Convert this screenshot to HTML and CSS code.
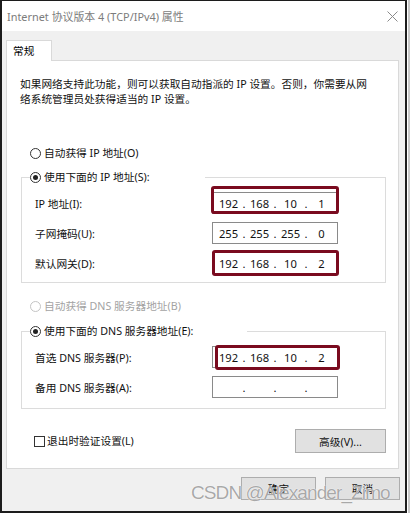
FILE: index.html
```html
<!DOCTYPE html>
<html lang="zh-CN">
<head>
    <meta charset="UTF-8">
    <meta name="viewport" content="width=device-width, initial-scale=1.0">
    <title>Internet 协议版本 4 (TCP/IPv4) 属性</title>
    <link rel="stylesheet" href="styles.css">
</head>
<body>

    <div class="screen">
        <div class="dialog">
            <div class="titlebar">
                <span class="title">Internet 协议版本 4 (TCP/IPv4) 属性</span>
                <svg class="close" width="11" height="11" viewBox="0 0 11 11">
                    <path d="M0.5 0.5 L10.5 10.5 M10.5 0.5 L0.5 10.5" stroke="#8a8a8a" stroke-width="1" fill="none"/>
                </svg>
            </div>

            <div class="body">
                <div class="tabs">
                    <div class="tab">常规</div>
                </div>

                <div class="panel">
                    <p class="intro">如果网络支持此功能，则可以获取自动指派的 IP 设置。否则，你需要从网<br>络系统管理员处获得适当的 IP 设置。</p>

                    <label class="option first"><span class="radio"></span>自动获得 IP 地址(O)</label>

                    <fieldset class="group ip-group">
                        <legend class="option legend-ip"><span class="radio on"></span>使用下面的 IP 地址(S):</legend>
                        <div class="rows">
                            <div class="row">
                                <span>IP 地址(I):</span>
                                <div class="field marked mark-ip">
                                    <span class="oct">192</span><span class="dot">.</span><span class="oct">168</span><span class="dot">.</span><span class="oct">10</span><span class="dot">.</span><span class="oct">1</span>
                                </div>
                            </div>
                            <div class="row">
                                <span>子网掩码(U):</span>
                                <div class="field">
                                    <span class="oct">255</span><span class="dot">.</span><span class="oct">255</span><span class="dot">.</span><span class="oct">255</span><span class="dot">.</span><span class="oct">0</span>
                                </div>
                            </div>
                            <div class="row">
                                <span>默认网关(D):</span>
                                <div class="field marked mark-gw">
                                    <span class="oct">192</span><span class="dot">.</span><span class="oct">168</span><span class="dot">.</span><span class="oct">10</span><span class="dot">.</span><span class="oct">2</span>
                                </div>
                            </div>
                        </div>
                    </fieldset>

                    <label class="option disabled dns-auto"><span class="radio"></span>自动获得 DNS 服务器地址(B)</label>

                    <fieldset class="group dns-group">
                        <legend class="option legend-dns"><span class="radio on"></span>使用下面的 DNS 服务器地址(E):</legend>
                        <div class="rows">
                            <div class="row">
                                <span>首选 DNS 服务器(P):</span>
                                <div class="field marked mark-dns">
                                    <span class="oct">192</span><span class="dot">.</span><span class="oct">168</span><span class="dot">.</span><span class="oct">10</span><span class="dot">.</span><span class="oct">2</span>
                                </div>
                            </div>
                            <div class="row">
                                <span>备用 DNS 服务器(A):</span>
                                <div class="field">
                                    <span class="oct"></span><span class="dot">.</span><span class="oct"></span><span class="dot">.</span><span class="oct"></span><span class="dot">.</span><span class="oct"></span>
                                </div>
                            </div>
                        </div>
                    </fieldset>

                    <div class="bottom-row">
                        <label class="check"><span class="box"></span>退出时验证设置(L)</label>
                        <button class="btn advanced">高级(V)...</button>
                    </div>
                </div>

                <div class="footer">
                    <button class="btn">确定</button>
                    <button class="btn">取消</button>
                </div>
            </div>
        </div>
        <div class="edge"></div>

        <div class="watermark">CSDN @Alexander_Zimo</div>
    </div>

</body>
</html>
```

FILE: styles.css
```css
body {
    margin: 0;
    background: #fff;
    font-family: "Noto Sans", "Noto Sans CJK SC", sans-serif;
    font-size: 10.7px;
    color: #111;
}
.screen {
    position: relative;
    display: flex;
    width: 415px;
    height: 514px;
}
.dialog {
    box-sizing: border-box;
    width: 407px;
    height: 513px;
    border: 2px solid #1c1c1c;
    border-top-width: 1px;
    display: flex;
    flex-direction: column;
    background: #f0f0f0;
}
.edge {
    width: 2px;
    height: 513px;
    margin-left: 1px;
    background: #c9c9c9;
}
.titlebar {
    height: 30px;
    background: #fff;
    display: flex;
    align-items: center;
    justify-content: space-between;
    padding: 0 7px 0 5px;
}
.title {
    color: #7c7c7c;
    font-size: 10.9px;
    line-height: 16px;
    margin-top: 2px;
}
.close {
    margin-top: 1px;
}
.body {
    flex: 1;
    display: flex;
    flex-direction: column;
    padding: 9px 6px 0 4px;
}
.tabs {
    display: flex;
}
.tab {
    position: relative;
    z-index: 1;
    box-sizing: border-box;
    width: 46px;
    height: 21px;
    margin-bottom: -1px;
    padding-left: 6px;
    line-height: 20px;
    background: #fff;
    border: 1px solid #d9d9d9;
    border-bottom: none;
    color: #000;
}
.panel {
    box-sizing: border-box;
    height: 409px;
    background: #fff;
    border: 1px solid #d9d9d9;
    padding: 16px 12px 0 14px;
    display: flex;
    flex-direction: column;
}
.intro {
    margin: 0 0 0 -1px;
    line-height: 15px;
    white-space: nowrap;
}
.option {
    display: flex;
    align-items: center;
    height: 16px;
    line-height: 16px;
    white-space: nowrap;
}
.option.first {
    margin: 38px 0 0 9px;
}
.option.disabled {
    color: #a3a3a3;
}
.dns-auto {
    margin: 15px 0 0 9px;
}
.radio {
    box-sizing: border-box;
    width: 11px;
    height: 11px;
    margin-right: 3px;
    border: 1px solid #333;
    border-radius: 50%;
    display: grid;
    place-items: center;
    background: #fff;
}
.radio.on::after {
    content: "";
    width: 5px;
    height: 5px;
    border-radius: 50%;
    background: #222;
}
.disabled .radio {
    border-color: #c4c4c4;
}
.group {
    margin: 8px 0 0 0;
    padding: 7px 0 8px 0;
    border: 1px solid #dcdcdc;
    min-width: 0;
}
.dns-group {
    margin-top: 9px;
    padding-bottom: 10px;
}
.group legend {
    padding: 0;
    margin-left: 8px;
    box-sizing: border-box;
}
.legend-ip {
    width: 175px;
}
.legend-dns {
    width: 217px;
}
.rows {
    display: flex;
    flex-direction: column;
    gap: 8px;
    padding-left: 13px;
}
.row {
    display: grid;
    grid-template-columns: 177px 126px;
    align-items: center;
    height: 22px;
}
.field {
    position: relative;
    box-sizing: border-box;
    height: 22px;
    border: 1px solid #8a8a8a;
    background: #fff;
    display: flex;
    align-items: center;
    font-size: 11.2px;
    color: #111;
}
.oct {
    flex: 1;
    text-align: center;
}
.dot {
    width: 0;
    display: flex;
    justify-content: center;
}
.marked::after {
    content: "";
    position: absolute;
    border: 3.5px solid #7a0b1f;
    border-radius: 3px;
}
.mark-ip::after {
    top: -7px;
    bottom: -1px;
    left: -2px;
    right: -2px;
}
.mark-gw::after {
    top: -3px;
    bottom: -3px;
    left: -1px;
    right: -2px;
}
.mark-dns::after {
    top: -2px;
    bottom: -3px;
    left: 2px;
    right: -3px;
}
.bottom-row {
    margin-top: 20px;
    display: flex;
    align-items: center;
    justify-content: space-between;
    padding-left: 13px;
}
.check {
    display: flex;
    align-items: center;
    line-height: 16px;
}
.box {
    box-sizing: border-box;
    width: 11px;
    height: 11px;
    margin-right: 2px;
    border: 1px solid #333;
    background: #fff;
}
.btn {
    box-sizing: border-box;
    height: 23px;
    width: 75px;
    padding: 0;
    background: #e1e1e1;
    border: 1px solid #adadad;
    font-family: "Noto Sans", "Noto Sans CJK SC", sans-serif;
    font-size: 10.7px;
    color: #111;
}
.advanced {
    width: 91px;
    height: 24px;
}
.footer {
    display: flex;
    justify-content: flex-end;
    gap: 9px;
    padding: 8px 0 0 0;
    margin-right: -1px;
}
.watermark {
    position: absolute;
    left: 191px;
    top: 482px;
    font-family: "Liberation Sans", sans-serif;
    font-size: 19px;
    letter-spacing: -0.9px;
    color: rgba(110, 110, 110, 0.6);
    text-shadow: 0 0 1px #fff, 0 0 1px #fff;
    white-space: nowrap;
}
```
